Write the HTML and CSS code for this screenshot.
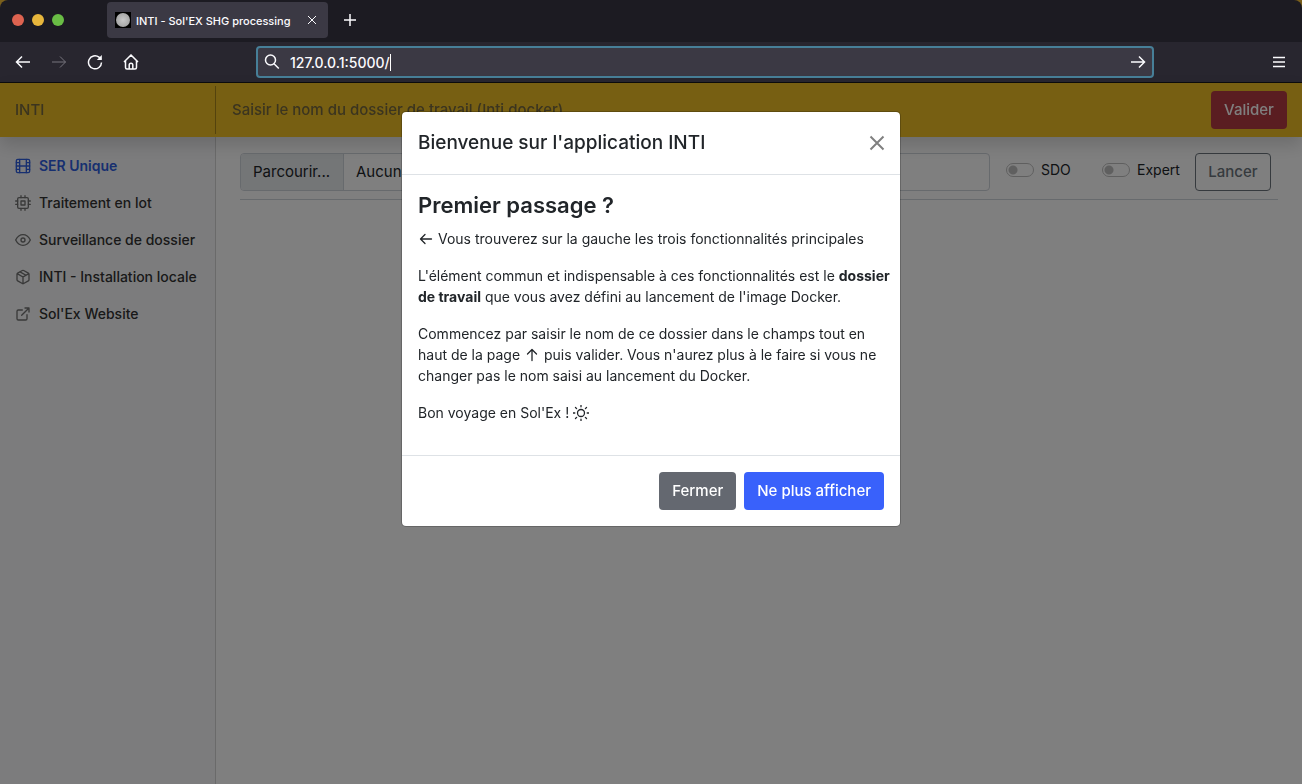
FILE: index.html
```html
<!DOCTYPE html>
<html lang="fr">
<head>
<meta charset="utf-8">
<title>INTI - Sol'EX SHG processing</title>
<link rel="stylesheet" href="styles.css">
</head>
<body>
<div class="browser">
  <div class="tabbar">
    <div class="lights"><span class="light light-close"></span><span class="light light-min"></span><span class="light light-max"></span></div>
    <div class="tab">
      <span class="favicon"><span class="disk"></span></span>
      <span class="tab-title">INTI - Sol'EX SHG processing</span>
      <button class="chrome-btn tab-close" aria-label="Fermer l'onglet"><svg width="10" height="10" viewBox="0 0 10 10"><path d="M1 1l8 8M9 1L1 9"/></svg></button>
    </div>
    <button class="chrome-btn new-tab" aria-label="Nouvel onglet"><svg width="12" height="12" viewBox="0 0 12 12" class="bold"><path d="M6 0v12M0 6h12"/></svg></button>
  </div>
  <div class="toolbar">
    <div class="nav-buttons">
      <button class="chrome-btn" aria-label="Précédent"><svg width="16" height="16" viewBox="0 0 16 16" class="bold"><path d="M15 8H1.500M7 2.500L1.500 8 7 13.500"/></svg></button>
      <button class="chrome-btn dim" aria-label="Suivant"><svg width="16" height="16" viewBox="0 0 16 16"><path d="M1 8h13.500M9 2.500L14.500 8 9 13.500"/></svg></button>
      <button class="chrome-btn" aria-label="Actualiser"><svg width="16" height="16" viewBox="0 0 16 16" class="bold"><path d="M14.500 8.500A6.500 6.500 0 1 1 12 3.200L14 5"/><path d="M14.800 1v5H9.800z" fill="currentColor" stroke="none"/></svg></button>
      <button class="chrome-btn" aria-label="Accueil"><svg width="16" height="16" viewBox="0 0 16 16" class="bold"><path d="M1 8l7-7 7 7M2.500 7v6.500a1.500 1.500 0 0 0 1.500 1.500h8a1.500 1.500 0 0 0 1.500-1.500V7M6.200 15v-4a1.800 1.800 0 0 1 3.600 0v4"/></svg></button>
    </div>
    <div class="urlbar">
      <svg width="16" height="16" viewBox="0 0 16 16" class="bold"><circle cx="6.500" cy="6" r="5"/><path d="M10 9.800l4.800 4.700"/></svg>
      <div class="url-text"><input class="url" size="10" aria-label="Adresse" value="127.0.0.1:5000/"><span class="caret"></span></div>
      <button class="chrome-btn" aria-label="Aller"><svg width="16" height="16" viewBox="0 0 16 16" class="bold"><path d="M1 8h13.500M9 2.500L14.500 8 9 13.500"/></svg></button>
    </div>
    <div class="menu"><button class="chrome-btn" aria-label="Menu"><svg width="12" height="12" viewBox="0 0 12 12" class="bold"><path d="M0 1.500h12M0 6h12M0 10.500h12"/></svg></button></div>
  </div>
</div>

<div class="app">
  <header class="header">
    <a class="brand" href="#">INTI</a>
    <input class="folder" aria-label="Dossier de travail" placeholder="Saisir le nom du dossier de travail (Inti docker)">
    <button class="btn btn-danger">Valider</button>
  </header>
  <div class="columns">
    <nav class="sidebar">
      <a class="link active" href="#"><svg width="16" height="16" viewBox="0 0 24 24"><rect x="2" y="2" width="20" height="20" rx="2.200"/><path d="M7 2v20M17 2v20M2 12h20M2 7h5M2 17h5M17 17h5M17 7h5"/></svg>SER Unique</a>
      <a class="link" href="#"><svg width="16" height="16" viewBox="0 0 24 24"><rect x="4" y="4" width="16" height="16" rx="2"/><path d="M9 9h6v6H9zM9 1v3M15 1v3M9 20v3M15 20v3M20 9h3M20 14h3M1 9h3M1 14h3"/></svg>Traitement en lot</a>
      <a class="link" href="#"><svg width="16" height="16" viewBox="0 0 24 24"><path d="M1 12s4-8 11-8 11 8 11 8-4 8-11 8-11-8-11-8z"/><circle cx="12" cy="12" r="3"/></svg>Surveillance de dossier</a>
      <a class="link" href="#"><svg width="16" height="16" viewBox="0 0 24 24"><path d="M16.500 9.400l-9-5.190M21 16V8a2 2 0 0 0-1-1.730l-7-4a2 2 0 0 0-2 0l-7 4A2 2 0 0 0 3 8v8a2 2 0 0 0 1 1.730l7 4a2 2 0 0 0 2 0l7-4A2 2 0 0 0 21 16zM3.270 6.960L12 12.010l8.730-5.050M12 22.080V12"/></svg>INTI - Installation locale</a>
      <a class="link" href="#"><svg width="16" height="16" viewBox="0 0 24 24"><path d="M18 13v6a2 2 0 0 1-2 2H5a2 2 0 0 1-2-2V8a2 2 0 0 1 2-2h6M15 3h6v6M10 14L21 3"/></svg>Sol'Ex Website</a>
    </nav>
    <main class="main">
      <form class="form">
        <label class="file"><input class="file-input" type="file"><span class="file-button">Parcourir...</span><span class="file-name">Aucun fichier</span></label>
        <label class="switch switch-sdo"><input type="checkbox">SDO</label>
        <label class="switch"><input type="checkbox">Expert</label>
        <button type="button" class="btn btn-outline">Lancer</button>
      </form>
    </main>
  </div>

  <div class="backdrop">
    <section class="modal" role="dialog" aria-labelledby="title">
      <div class="modal-header">
        <h5 class="modal-title" id="title">Bienvenue sur l'application INTI</h5>
        <button class="close" aria-label="Fermer"><svg width="16" height="16" viewBox="0 0 16 16"><path d="M1.500 1.500l13 13M14.500 1.500l-13 13"/></svg></button>
      </div>
      <div class="modal-body">
        <h4 class="subtitle">Premier passage ?</h4>
        <p><svg class="glyph" width="16" height="16" viewBox="0 0 16 16"><path d="M13.500 8H3M7 3.500L2.500 8 7 12.500"/></svg> Vous trouverez sur la gauche les trois fonctionnalités principales</p>
        <p>L'élément commun et indispensable à ces fonctionnalités est le <strong>dossier de travail</strong> que vous avez défini au lancement de l'image Docker.</p>
        <p>Commencez par saisir le nom de ce dossier dans le champs tout en haut de la page <svg class="glyph" width="16" height="16" viewBox="0 0 16 16"><path d="M8 13.500V3M3.500 7L8 2.500 12.500 7"/></svg> puis valider. Vous n'aurez plus à le faire si vous ne changer pas le nom saisi au lancement du Docker.</p>
        <p>Bon voyage en Sol'Ex ! <svg class="glyph" width="16" height="16" viewBox="0 0 16 16"><circle cx="8" cy="8" r="3.500"/><path d="M8 .2v1.600M8 14.200v1.600M.2 8h1.600M14.200 8h1.600M2.500 2.500l1.100 1.100M12.400 12.400l1.100 1.100M2.500 13.500l1.100-1.100M12.400 3.600l1.100-1.100"/></svg></p>
      </div>
      <div class="modal-footer">
        <button class="btn btn-secondary">Fermer</button>
        <button class="btn btn-primary">Ne plus afficher</button>
      </div>
    </section>
  </div>
</div>
</body>
</html>
```
FILE: styles.css
```css
* { box-sizing: border-box; }
body {
  margin: 0;
  min-height: 100vh;
  display: flex;
  flex-direction: column;
  background: #7a5f1c;
  color: #212529;
  font: 14px/21px Inter, "Liberation Sans", sans-serif;
}
button, input { font: inherit; }
svg { flex: none; fill: none; stroke: currentColor; }

/* Browser window */
.browser { color: #fbfbfe; background: #1c1b22; border-radius: 8px 8px 0 0; border-bottom: 1px solid #0c0c0d; }
.browser .bold { stroke-width: 1.5; }
.tabbar { display: flex; align-items: center; height: 42px; padding: 0 12px 2px; }
.lights { display: flex; gap: 8px; width: 95px; }
.light { width: 12px; height: 12px; border-radius: 50%; }
.light-close { background: #dd6350; }
.light-min { background: #e7b63c; }
.light-max { background: #69bd45; }
.tab { display: flex; align-items: center; width: 221px; height: 36px; padding: 0 8px; border-radius: 4px; background: #3b3944; }
.favicon { display: flex; align-items: center; justify-content: center; width: 16px; height: 16px; background: #000; }
.disk { width: 14px; height: 14px; border-radius: 50%; background: radial-gradient(#c8c8c8, #999); }
.tab-title { flex: 1; margin-left: 5px; font-size: 11px; line-height: 16px; padding-top: 2px; font-weight: 500; white-space: nowrap; }
.chrome-btn { display: flex; align-items: center; justify-content: center; padding: 0; border: 0; background: none; color: inherit; }
.tab-close { width: 16px; height: 16px; }
.new-tab { width: 44px; height: 36px; }
.toolbar { display: flex; align-items: center; height: 40px; padding: 0 16px 0 15px; background: #28262f; }
.nav-buttons { display: flex; gap: 20px; width: 241px; }
.dim { color: #77757e; }
.urlbar { display: flex; align-items: center; flex: 1; height: 32px; padding: 0 6px; border: 2px solid #477f98; border-radius: 4px; background: #3b3944; }
.url-text { flex: 1; display: flex; align-items: center; margin-left: 10px; }
.url { field-sizing: content; padding: 0; border: 0; outline: 0; background: none; color: inherit; font-weight: 500; }
.caret { width: 1px; height: 17px; background: #fff; }
.menu { display: flex; justify-content: flex-end; width: 132px; padding-right: 1px; }

/* Application */
.app { position: relative; flex: 1; display: flex; flex-direction: column; background: #fff; }
.header { position: relative; z-index: 1; display: flex; align-items: center; height: 54px; padding-right: 15px; background: #efbf24; box-shadow: 0 8px 16px rgba(0, 0, 0, .15); font-size: 15px; line-height: 24px; font-weight: 500; }
.brand { width: 216px; padding: 12px 15px; border-right: 1px solid #a8861a; color: #76693f; text-decoration: none; }
.folder { flex: 1; padding: 12px 16px; border: 0; background: none; }
.folder::placeholder { color: #76693f; opacity: 1; }
.btn { padding: 6px 12px; border: 1px solid transparent; border-radius: 4px; font-size: 15px; line-height: 24px; font-weight: 500; color: #fff; white-space: nowrap; }
.btn-danger { width: 76px; background: #b53b42; }
.btn-primary { background: #3961fb; }
.btn-secondary { background: #646870; }
.btn-outline { width: 76px; background: none; border-color: #6c757d; color: #6c757d; }
.columns { flex: 1; display: flex; }
.sidebar { width: 216px; padding-top: 10px; border-right: 1px solid #d5d5d5; background: #f8f9fa; }
.link { display: flex; align-items: center; gap: 8px; padding: 8px 15px; color: #333; font-weight: 500; text-decoration: none; white-space: nowrap; }
.link svg { color: #727272; stroke-width: 2; stroke-linecap: round; stroke-linejoin: round; }
.active, .active svg { color: #2f5fe0; }
.active { font-weight: 600; }
.main { flex: 1; min-width: 0; padding: 16px 24px; }
.form { display: flex; align-items: flex-start; padding: 0 7px 8px 0; border-bottom: 1px solid #ced4da; }
.file { position: relative; flex: 1; display: flex; min-width: 0; overflow: hidden; border: 1px solid #ced4da; border-radius: 4px; font-size: 16px; line-height: 24px; }
.file-input { position: absolute; inset: 0; opacity: 0; }
.file-button { flex: none; width: 103px; padding: 6px 12px; border-right: 1px solid #ced4da; background: #e9ecef; font-size: 15px; }
.file-name { padding: 6px 12px; font-size: 15px; white-space: nowrap; }
.switch { flex: none; display: flex; align-items: center; gap: 7px; width: 93px; margin-top: 6px; }
.switch-sdo { width: 96px; margin-left: 16px; }
.switch input { appearance: none; flex: none; width: 28px; height: 14px; margin: 0; border: 1px solid #bfbfbf; border-radius: 7px; background: radial-gradient(circle at 6px 6px, #bfbfbf 4px, transparent 5px); }

/* Welcome dialog */
.backdrop { position: absolute; z-index: 2; inset: 0; display: flex; justify-content: center; align-items: flex-start; padding-top: 28px; background: rgba(0, 0, 0, .5); }
.modal { width: 500px; border: 1px solid rgba(0, 0, 0, .2); border-radius: 5px; background: #fff; background-clip: padding-box; }
.modal-header { display: flex; align-items: center; justify-content: space-between; padding: 16px 15px 16px 16px; border-bottom: 1px solid #dee2e6; }
.modal-title { margin: 0; font-size: 19px; line-height: 30px; font-weight: 500; }
.close { display: flex; padding: 0; border: 0; background: none; color: #808080; }
.close svg { stroke-width: 2; }
.modal-body { padding: 16px 8px 32px 16px; }
.subtitle { margin: 0 0 8px; font-size: 22px; line-height: 29px; font-weight: 600; }
.modal-body p { margin: 0 0 16px; }
.modal-body p:last-child { margin: 0; }
.glyph { vertical-align: -3px; stroke-width: 1.3; stroke-linecap: round; stroke-linejoin: round; }
.modal-footer { display: flex; justify-content: flex-end; gap: 8px; padding: 16px; border-top: 1px solid #dee2e6; }
```
